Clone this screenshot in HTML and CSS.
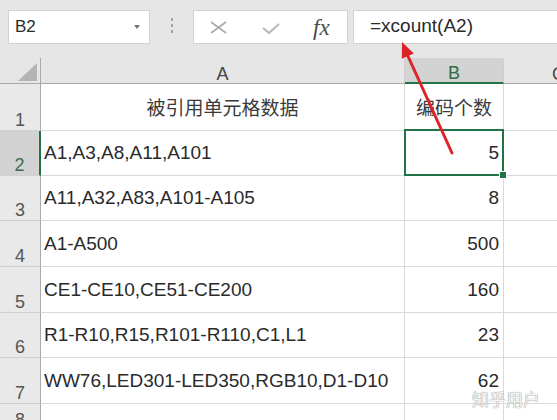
FILE: index.html
```html
<!DOCTYPE html>
<html lang="zh">
<head>
<meta charset="utf-8">
<title>xcount</title>
<link rel="stylesheet" href="styles.css">
</head>
<body>
<div class="toolbar">
  <div class="namebox"><span>B2</span><span class="caret"></span></div>
  <div class="grip"><i></i><i></i><i></i></div>
  <div class="fbtns">
    <svg class="ic-x" width="17" height="13" viewBox="0 0 17 13"><path d="M1 1 L16 12 M16 1 L1 12" stroke="#a9a9a9" stroke-width="1.6" fill="none"/></svg>
    <svg class="ic-ck" width="18" height="11" viewBox="0 0 18 11"><path d="M1 5 L7 10 L17 1" stroke="#b9b9b9" stroke-width="2.2" fill="none"/></svg>
    <span class="fx">fx</span>
  </div>
  <div class="formula">=xcount(A2)</div>
</div>
<div class="sheet">
  <div class="corner"><span class="tri"></span></div>
  <div class="ch">A</div>
  <div class="ch ch-sel">B</div>
  <div class="ch">C</div>

  <div class="rh">1</div>
  <div class="c ctr cjk">被引用单元格数据</div>
  <div class="c ctr cjk">编码个数</div>
  <div class="c"></div>

  <div class="rh rh-sel">2</div>
  <div class="c t">A1,A3,A8,A11,A101</div>
  <div class="c n sel">5<span class="handle"></span></div>
  <div class="c"></div>

  <div class="rh">3</div>
  <div class="c t">A11,A32,A83,A101-A105</div>
  <div class="c n">8</div>
  <div class="c"></div>

  <div class="rh">4</div>
  <div class="c t">A1-A500</div>
  <div class="c n">500</div>
  <div class="c"></div>

  <div class="rh">5</div>
  <div class="c t">CE1-CE10,CE51-CE200</div>
  <div class="c n">160</div>
  <div class="c"></div>

  <div class="rh">6</div>
  <div class="c t">R1-R10,R15,R101-R110,C1,L1</div>
  <div class="c n">23</div>
  <div class="c"></div>

  <div class="rh">7</div>
  <div class="c t">WW76,LED301-LED350,RGB10,D1-D10</div>
  <div class="c n">62</div>
  <div class="c"></div>

  <div class="rh">8</div>
  <div class="c"></div>
  <div class="c"></div>
  <div class="c"></div>
</div>
<svg class="arrow" width="557" height="420" viewBox="0 0 557 420">
  <line x1="452" y1="153" x2="407" y2="54" stroke="#dc2329" stroke-width="3" stroke-linecap="round"/>
  <polygon points="402,42 413.8,53.5 401.8,58.8" fill="#dc2329"/>
</svg>
<div class="watermark">知乎用户</div>
</body>
</html>
```
FILE: styles.css
```css
body {
  margin: 0;
  width: 557px;
  height: 420px;
  overflow: hidden;
  position: relative;
  background: #fff;
  font-family: "Liberation Sans", "Noto Sans CJK SC", sans-serif;
}

.toolbar {
  height: 58px;
  box-sizing: border-box;
  padding-top: 10px;
  background: #e6e6e6;
  display: flex;
  align-items: flex-start;
}

.namebox {
  margin-left: 8px;
  width: 142px;
  height: 34px;
  box-sizing: border-box;
  background: #fff;
  border: 1px solid #d2d2d2;
  display: flex;
  align-items: center;
  padding-left: 6px;
  font-size: 17px;
  color: #2a2a2a;
}

.caret {
  margin-left: auto;
  margin-right: 9px;
  width: 0;
  height: 0;
  border-left: 3px solid transparent;
  border-right: 3px solid transparent;
  border-top: 4px solid #777;
}

.grip {
  width: 43px;
  height: 34px;
  box-sizing: border-box;
  padding-bottom: 4px;
  display: flex;
  flex-direction: column;
  align-items: center;
  justify-content: center;
  gap: 3px;
}

.grip i {
  display: block;
  width: 2px;
  height: 3px;
  background: #a3a3a3;
}

.fbtns {
  width: 155px;
  height: 34px;
  box-sizing: border-box;
  background: #fff;
  border: 1px solid #d2d2d2;
  display: flex;
  align-items: center;
  padding-left: 16px;
}

.ic-x { display: block; }
.ic-ck { display: block; margin-left: 35px; margin-top: 2px; }

.fx {
  margin-left: 33px;
  font-family: "Liberation Serif", serif;
  font-style: italic;
  font-size: 23px;
  color: #4a4a4a;
  line-height: 1;
}

.formula {
  margin-left: 5px;
  flex: 1;
  height: 34px;
  box-sizing: border-box;
  background: #fff;
  border: 1px solid #d2d2d2;
  border-right: none;
  padding-left: 16px;
  padding-bottom: 2px;
  display: flex;
  align-items: center;
  font-size: 19px;
  color: #2a2a2a;
}

.sheet {
  display: grid;
  grid-template-columns: 41px 364px 99px 110px;
  grid-template-rows: 26px 47px 45px 45px 46px 46px 45px 46px 27px;
}

.corner {
  background: #e6e6e6;
  border-right: 1px solid #a9a9a9;
  border-bottom: 1px solid #a9a9a9;
  box-sizing: border-box;
  display: flex;
  justify-content: flex-end;
  align-items: flex-end;
  padding: 0 3px 2px 0;
}

.tri {
  width: 0;
  height: 0;
  border-left: 19px solid transparent;
  border-bottom: 18px solid #b4b4b4;
}

.ch {
  background: #e6e6e6;
  box-sizing: border-box;
  border-right: 1px solid #cfcfcf;
  border-bottom: 1px solid #a9a9a9;
  display: flex;
  justify-content: center;
  align-items: flex-end;
  font-size: 18px;
  line-height: 18px;
  color: #444;
  overflow: hidden;
  white-space: nowrap;
}

.ch-sel {
  background: #d3d3d3;
  border-bottom: 2px solid #217346;
  color: #2e6b47;
}

.rh {
  background: #e9e9e9;
  box-sizing: border-box;
  border-right: 1px solid #a9a9a9;
  border-bottom: 1px solid #d0d0d0;
  display: flex;
  justify-content: center;
  align-items: flex-end;
  font-size: 18px;
  line-height: 20px;
  color: #555;
}

.rh-sel {
  background: #d3d3d3;
  border-right: 2px solid #217346;
  color: #3b6b4f;
}

.c {
  box-sizing: border-box;
  border-right: 1px solid #d9d9d9;
  border-bottom: 1px solid #d9d9d9;
  display: flex;
  align-items: center;
  font-size: 19px;
  line-height: 20px;
  color: #2a2a2a;
  white-space: nowrap;
  overflow: visible;
}

.t { padding-left: 3px; }

.n {
  justify-content: flex-end;
  padding-right: 4px;
}

.ctr { justify-content: center; }

.cjk {
  font-family: "Noto Sans CJK SC", sans-serif;
  font-size: 19px;
  color: #3a3a3a;
}

.sel { position: relative; }

.sel::after {
  content: "";
  position: absolute;
  top: -2px;
  left: -1px;
  right: -1px;
  bottom: -1px;
  border: 2px solid #217346;
}

.handle {
  position: absolute;
  right: -3px;
  bottom: -3px;
  width: 6px;
  height: 6px;
  background: #217346;
  box-shadow: 0 0 0 1px #fff;
  z-index: 2;
}

.arrow {
  position: absolute;
  left: 0;
  top: 0;
  pointer-events: none;
}

.watermark {
  position: absolute;
  left: 472px;
  top: 389px;
  font-family: "Noto Sans CJK SC", sans-serif;
  font-size: 17px;
  line-height: 20px;
  color: #f4f4f4;
  text-shadow: 0 0 1px #8a8a8a, 0 0 1px #b0b0b0;
}
```
